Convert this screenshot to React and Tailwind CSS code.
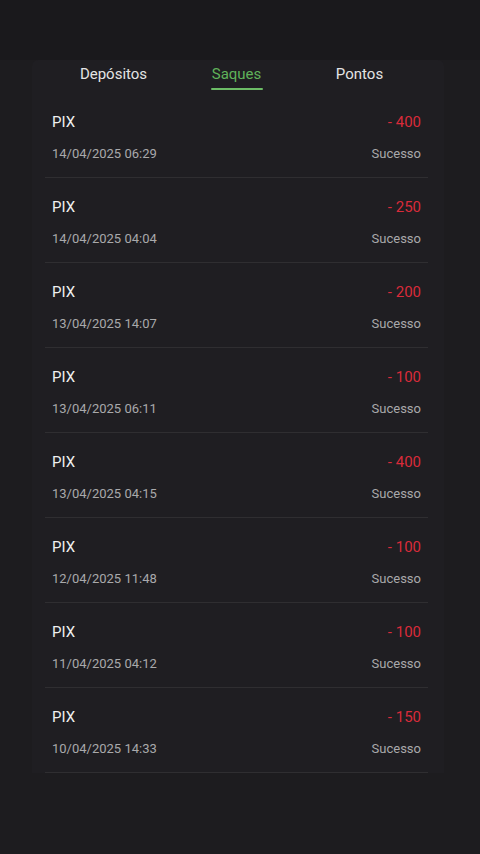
const ROWS = [
  { amount: 400, date: '14/04/2025 06:29' },
  { amount: 250, date: '14/04/2025 04:04' },
  { amount: 200, date: '13/04/2025 14:07' },
  { amount: 100, date: '13/04/2025 06:11' },
  { amount: 400, date: '13/04/2025 04:15' },
  { amount: 100, date: '12/04/2025 11:48' },
  { amount: 100, date: '11/04/2025 04:12' },
  { amount: 150, date: '10/04/2025 14:33' },
]

export default function App() {
  return (
    <div
      className="w-[480px] h-[854px] bg-[#1d1c1f] overflow-hidden"
      style={{ fontFamily: 'Roboto, "Noto Sans", sans-serif' }}
    >
      <div className="h-[60px] bg-[#1a191c]" />
      <div className="ml-[32px] w-[412px] bg-[#1f1e22] rounded-t-md pt-[2px]">
        <div className="flex items-start h-[31px] pl-[20px] pr-[23px]">
          {['Depósitos', 'Saques', 'Pontos'].map(label => (
            <div key={label} className="flex-1 flex justify-center">
              <div className="flex flex-col items-center">
                <span
                  className={`text-[15px] leading-[24px] ${label === 'Saques' ? 'text-[#5fb25a]' : 'text-[#e4e4e4]'}`}
                >
                  {label}
                </span>
                {label === 'Saques' && <span className="mt-[2px] w-[52px] h-[2px] bg-[#6cbc66] rounded" />}
              </div>
            </div>
          ))}
        </div>
        <div className="pl-[13px] pr-[16px]">
          {ROWS.map((r, i) => (
            <div key={i} className="border-b border-[#2f2e31] h-[85px] flex flex-col px-[7px]">
              <div className="flex justify-between mt-[19px] leading-[20px]">
                <span className="text-[15px] text-[#f0f0f0]">PIX</span>
                <span className="text-[15px] text-[#d92b3a]">- {r.amount}</span>
              </div>
              <div className="flex justify-between mt-[12px] leading-[20px]">
                <span className="text-[13px] text-[#a9a9ab]">{r.date}</span>
                <span className="text-[13px] text-[#a9a9ab]">Sucesso</span>
              </div>
            </div>
          ))}
        </div>
      </div>
    </div>
  )
}
